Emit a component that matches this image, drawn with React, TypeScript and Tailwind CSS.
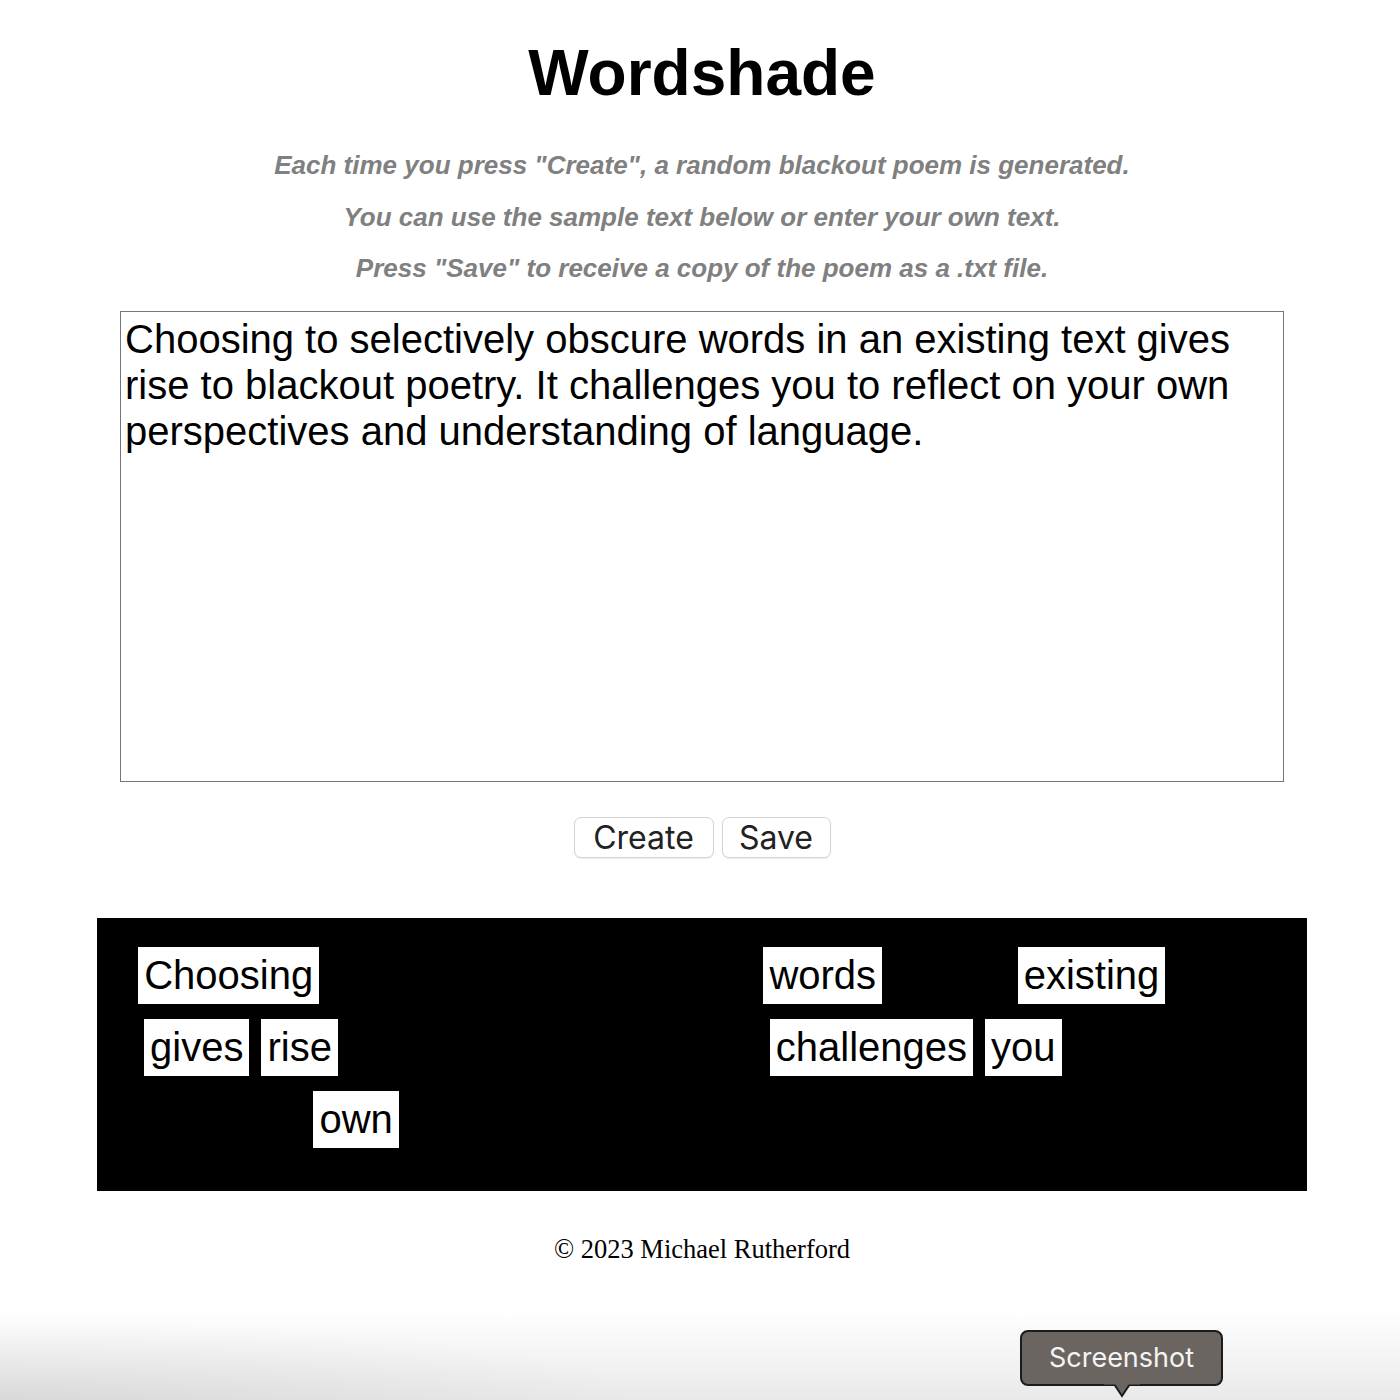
import React from 'react';

const SAMPLE =
  'Choosing to selectively obscure words in an existing text gives rise to blackout poetry. It challenges you to reflect on your own perspectives and understanding of language.';

// the poem as the screenshot shows it: one array per rendered line, true = kept word
const POEM: [string, boolean][][] = [
  [
    ['Choosing', true],
    ['to', false],
    ['selectively', false],
    ['obscure', false],
    ['words', true],
    ['in', false],
    ['an', false],
    ['existing', true],
    ['text', false],
  ],
  [
    ['gives', true],
    ['rise', true],
    ['to', false],
    ['blackout', false],
    ['poetry.', false],
    ['It', false],
    ['challenges', true],
    ['you', true],
    ['to', false],
    ['reflect', false],
  ],
  [
    ['on', false],
    ['your', false],
    ['own', true],
    ['perspectives', false],
    ['and', false],
    ['understanding', false],
    ['of', false],
    ['language.', false],
  ],
];

// small per-line nudges so the centred lines sit where the original's did
const LINE_PAD = ['pl-0', 'pl-[4px]', 'pl-[24px]'];

function Word({ text, kept }: { text: string; kept: boolean }) {
  return (
    <span
      className={
        kept
          ? 'mr-[12px] bg-white px-[6px] py-[5px] text-black leading-[47px]'
          : 'mr-[12px] bg-black px-[6px] py-[5px] text-black leading-[47px]'
      }
    >
      {text}
    </span>
  );
}

export default function App() {
  return (
    <div className="relative min-h-[1400px] overflow-hidden bg-white font-['Liberation_Sans',Arial,sans-serif] text-black">
      <div className="flex flex-col items-center pl-[4px]">
        <h1 className="mt-[36px] text-[64px] font-bold leading-[74px]">Wordshade</h1>

        <div className="mt-[40px] flex flex-col items-center gap-[21.5px] text-[26px] font-bold italic leading-[30px] text-[#808080]">
          <p>Each time you press "Create", a random blackout poem is generated.</p>
          <p>You can use the sample text below or enter your own text.</p>
          <p>Press "Save" to receive a copy of the poem as a .txt file.</p>
        </div>

        <textarea
          className="mt-[28px] h-[471px] w-[1164px] resize-none border border-[#767676] pt-[4px] pr-[2px] pb-[2px] pl-[4px] text-[40px] leading-[46px] text-black outline-none"
          defaultValue={SAMPLE}
        />

        <div className="mt-[35px] flex gap-[8px] font-['Inter',sans-serif] text-[32px] text-[#222]">
          <button className="h-[41px] w-[140px] rounded-[7px] border border-[#d4d4d4] bg-white leading-none shadow-[0_1px_1px_rgba(0,0,0,0.08)]">
            Create
          </button>
          <button className="h-[41px] w-[109px] rounded-[7px] border border-[#d4d4d4] bg-white leading-none shadow-[0_1px_1px_rgba(0,0,0,0.08)]">
            Save
          </button>
        </div>

        <div className="mt-[60px] flex w-[1210px] flex-col gap-[15px] bg-black pt-[29px] pb-[43px] text-[40px]">
          {POEM.map((line, i) => (
            <div key={i} className={`flex justify-center ${LINE_PAD[i]}`}>
              {line.map(([w, kept], j) => (
                <Word key={j} text={w} kept={kept} />
              ))}
            </div>
          ))}
        </div>

        <footer className="mt-[43px] font-['Liberation_Serif','Times_New_Roman',serif] text-[26.5px] leading-[30px]">
          © 2023 Michael Rutherford
        </footer>
      </div>

      {/* macOS screenshot overlay at the bottom edge */}
      <div className="pointer-events-none absolute inset-x-0 bottom-0 h-[90px] bg-gradient-to-b from-white/0 to-[#e9e9e9]" />
      <div className="pointer-events-none absolute bottom-0 left-0 h-[90px] w-[700px] bg-[radial-gradient(ellipse_at_bottom_left,rgba(0,0,0,0.07),transparent_65%)]" />

      <div className="absolute left-[1020px] top-[1330px]">
        <div className="flex h-[56px] w-[203px] items-center justify-center rounded-[8px] border-2 border-[#1c1c1c] bg-[#6b6562] font-['Inter',sans-serif] text-[27px] text-[#f4f4f4]">
          Screenshot
        </div>
        <svg className="absolute left-[84px] top-[53px]" width="36" height="20" viewBox="0 0 36 20">
          <path d="M0 1 L10 1 L18 13 L26 1 L36 1" fill="#6b6562" stroke="#1c1c1c" strokeWidth="2" />
          <rect x="0" y="0" width="36" height="1.5" fill="#6b6562" />
        </svg>
      </div>
    </div>
  );
}
